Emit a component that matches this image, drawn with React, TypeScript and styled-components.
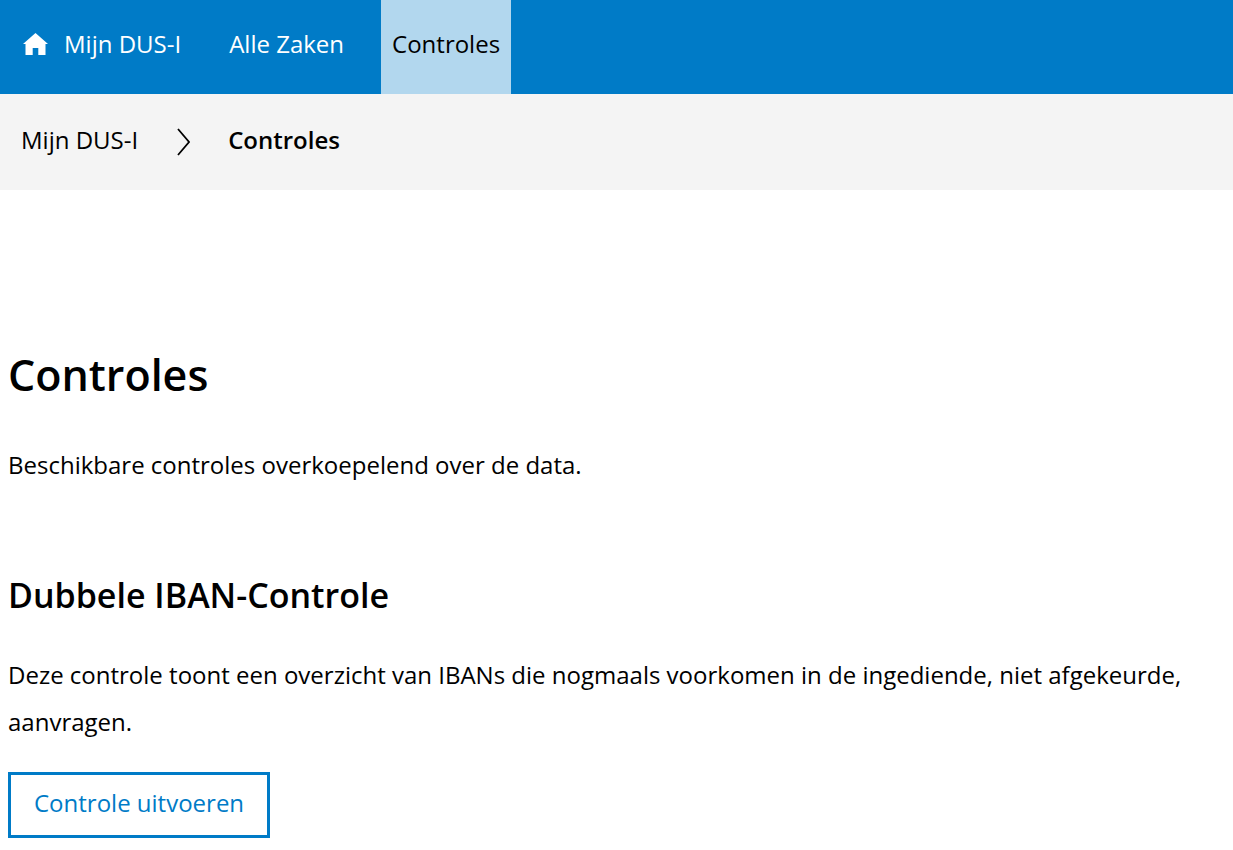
import React from "react";
import styled, { createGlobalStyle } from "styled-components";

const GlobalStyle = createGlobalStyle`
  *, *::before, *::after { box-sizing: border-box; }
  body {
    margin: 0;
    background: #fff;
    color: #000;
    font-family: "Open Sans", "Noto Sans", sans-serif;
    font-size: 24px;
    line-height: 47px;
  }
`;

const NavBar = styled.nav`
  display: flex;
  gap: 26px;
  height: 94px;
  padding-left: 12px;
  background: #007bc7;
`;

const NavLink = styled.a<{ $active?: boolean }>`
  display: flex;
  align-items: center;
  gap: 16px;
  padding: 0 11px 8px;
  background: ${(p) => (p.$active ? "#b2d7ee" : "transparent")};
  color: ${(p) => (p.$active ? "#000" : "#fff")};
  text-decoration: none;
  white-space: nowrap;
`;

const Crumbs = styled.nav`
  display: flex;
  align-items: center;
  gap: 38px;
  height: 96px;
  padding: 0 21px 6px;
  background: #f4f4f4;
`;

const CrumbLink = styled.a`
  color: #000;
  text-decoration: none;
`;

const CrumbCurrent = styled.span`
  font-weight: 600;
`;

const Main = styled.main`
  padding: 150px 8px 12px;
`;

const Title = styled.h1`
  margin: 0 0 31px;
  font-size: 43px;
  font-weight: 600;
  line-height: 70px;
`;

const Subtitle = styled.h2`
  margin: 77px 0 26px;
  font-size: 34px;
  font-weight: 600;
  line-height: 60px;
`;

const Text = styled.p`
  margin: 0;
`;

const ActionButton = styled.button`
  height: 66px;
  margin-top: 27px;
  padding: 0 23px 6px;
  border: 3px solid #007bc7;
  background: #fff;
  color: #007bc7;
  font: inherit;
  cursor: pointer;
`;

const HomeIcon = () => (
  <svg width="25" height="26" viewBox="0 0 25 26" aria-hidden="true">
    <path d="M12.500 3 0 14h2.500V25h7.200v-7h5.600v7h7.200V14h2.500Z" fill="#fff" />
  </svg>
);

const Chevron = () => (
  <svg width="14" height="34" viewBox="0 0 14 34" aria-hidden="true">
    <path d="M2 7 13 20 2 33" fill="none" stroke="#000" strokeWidth="1.800" />
  </svg>
);

export default function App() {
  return (
    <>
      <GlobalStyle />
      <header>
        <NavBar aria-label="Hoofdmenu">
          <NavLink href="#mijn"><HomeIcon />Mijn DUS-I</NavLink>
          <NavLink href="#zaken">Alle Zaken</NavLink>
          <NavLink href="#controles" $active aria-current="page">Controles</NavLink>
        </NavBar>
        <Crumbs aria-label="Kruimelpad">
          <CrumbLink href="#mijn">Mijn DUS-I</CrumbLink>
          <Chevron />
          <CrumbCurrent>Controles</CrumbCurrent>
        </Crumbs>
      </header>
      <Main>
        <Title>Controles</Title>
        <Text>Beschikbare controles overkoepelend over de data.</Text>
        <Subtitle>Dubbele IBAN-Controle</Subtitle>
        <Text>
          Deze controle toont een overzicht van IBANs die nogmaals voorkomen in de ingediende, niet afgekeurde, aanvragen.
        </Text>
        <ActionButton type="button">Controle uitvoeren</ActionButton>
      </Main>
    </>
  );
}
